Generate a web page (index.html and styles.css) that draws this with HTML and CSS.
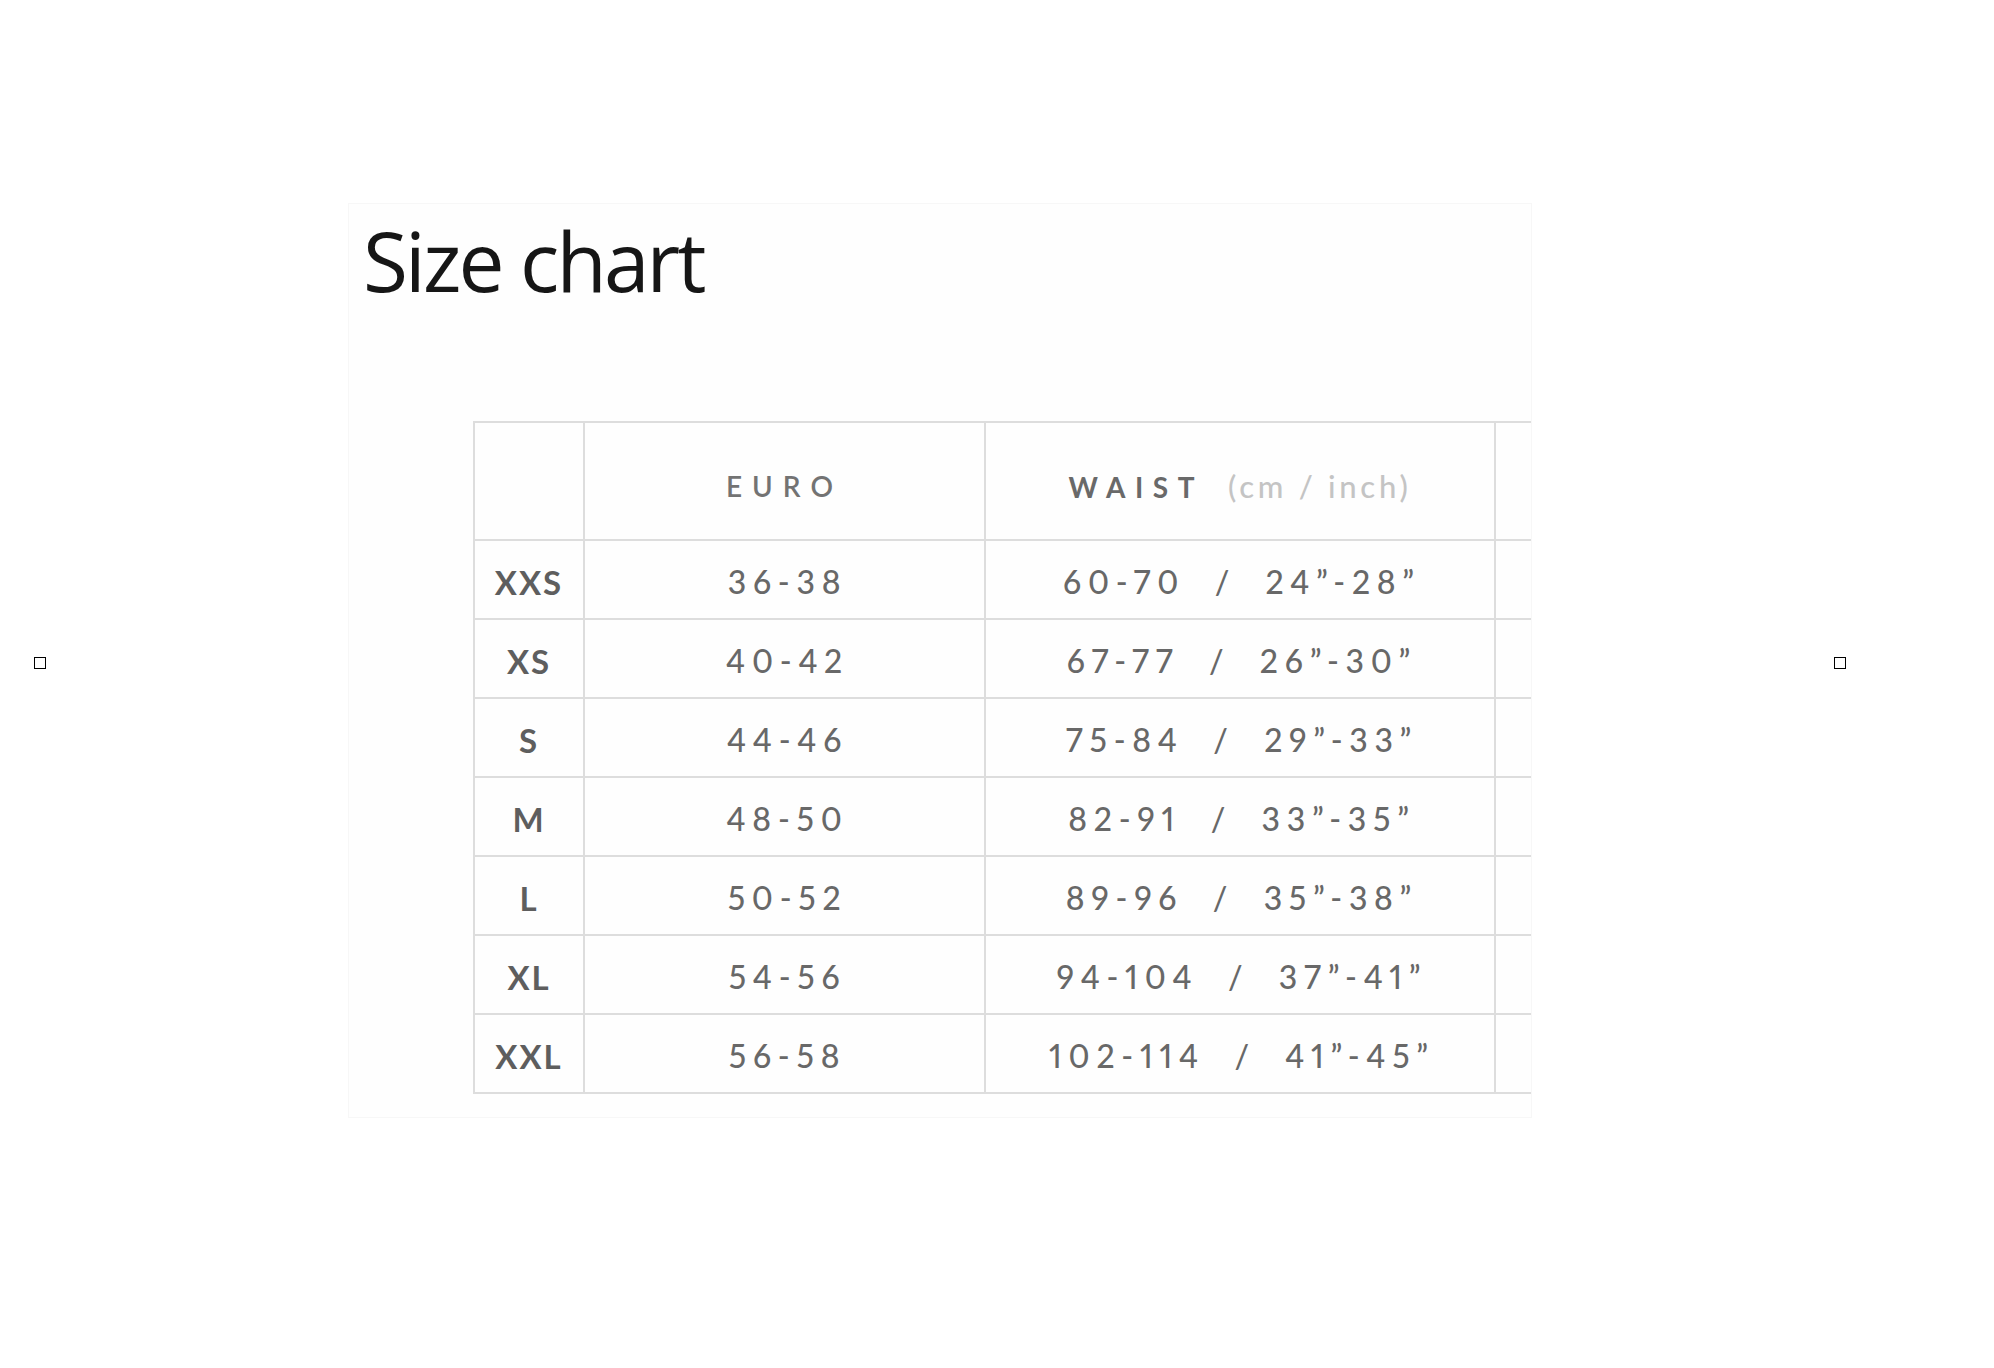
FILE: index.html
```html
<!DOCTYPE html>
<html lang="en">
<head>
<meta charset="utf-8">
<title>Size chart</title>
<link rel="stylesheet" href="styles.css">
</head>
<body>
<div class="slider">
  <button class="arrow arrow-prev" aria-label="Previous"></button>
  <div class="stage">
    <div class="chart">
      <h1 class="chart-title">Size chart</h1>
      <table class="size-table">
        <colgroup>
          <col class="c-size"><col class="c-euro"><col class="c-waist"><col class="c-next">
        </colgroup>
        <thead>
          <tr>
            <th></th>
            <th class="h-euro">EURO</th>
            <th class="h-waist">WAIST<span class="unit">(cm / inch)</span></th>
            <th></th>
          </tr>
        </thead>
        <tbody>
          <tr><td class="size">XXS</td><td>36-38</td><td class="waist">60-70  /  24”-28”</td><td></td></tr>
          <tr><td class="size">XS</td><td>40-42</td><td class="waist">67-77  /  26”-30”</td><td></td></tr>
          <tr><td class="size">S</td><td>44-46</td><td class="waist">75-84  /  29”-33”</td><td></td></tr>
          <tr><td class="size">M</td><td>48-50</td><td class="waist">82-91  /  33”-35”</td><td></td></tr>
          <tr><td class="size">L</td><td>50-52</td><td class="waist">89-96  /  35”-38”</td><td></td></tr>
          <tr><td class="size">XL</td><td>54-56</td><td class="waist">94-104  /  37”-41”</td><td></td></tr>
          <tr><td class="size">XXL</td><td>56-58</td><td class="waist">102-114  /  41”-45”</td><td></td></tr>
        </tbody>
      </table>
    </div>
  </div>
  <button class="arrow arrow-next" aria-label="Next"></button>
</div>
</body>
</html>
```
FILE: styles.css
```css
html, body {
  margin: 0;
  padding: 0;
  background: #ffffff;
}

body {
  font-family: "Lato", "DejaVu Sans", sans-serif;
}

.slider {
  width: 1880px;
  box-sizing: border-box;
  padding: 0 34px;
  margin-top: 203px;
  display: flex;
  align-items: center;
}

.arrow {
  flex: none;
  width: 12px;
  height: 12px;
  margin-top: 5px;
  padding: 0;
  border: 1px solid #000;
  background: #fff;
  box-sizing: border-box;
}

.stage {
  flex: 1;
  display: flex;
  justify-content: center;
}

.chart {
  width: 1184px;
  height: 915px;
  box-sizing: border-box;
  background: #fefefe;
  border: 1px solid #f7f7f7;
  overflow: hidden;
  padding: 15px 0 0 14px;
}

.chart-title {
  margin: 0;
  font-family: "Open Sans", "Noto Sans", sans-serif;
  font-weight: 400;
  font-size: 82px;
  line-height: 82px;
  letter-spacing: -0.035em;
  color: #161616;
}

.size-table {
  margin: 120px 0 0 110px;
  border-collapse: collapse;
  table-layout: fixed;
  width: 1221px;
  border: 2px solid #dddddd;
}

.c-size { width: 110px; }
.c-euro { width: 401px; }
.c-waist { width: 510px; }
.c-next { width: 200px; }

.size-table th,
.size-table td {
  box-sizing: border-box;
  border: 2px solid #dddddd;
  padding: 4px 0 0 0;
  text-align: center;
  vertical-align: middle;
  white-space: pre;
  font-variant-numeric: proportional-nums;
}

.size-table th {
  height: 118px;
  padding-top: 10px;
  font-size: 28px;
  letter-spacing: 0.36em;
  font-weight: 600;
  color: #737373;
}

.size-table th.h-waist {
  font-weight: 700;
  letter-spacing: 0.34em;
  color: #696969;
  padding-left: 0;
}

.unit {
  margin-left: 24px;
  font-size: 31px;
  font-weight: 500;
  letter-spacing: 0.12em;
  color: #c4c4c4;
}

.size-table td {
  height: 79px;
  font-size: 32px;
  font-weight: 500;
  letter-spacing: 0.21em;
  color: #686868;
  padding-left: 6px;
}

.size-table td.size {
  font-weight: 700;
  font-size: 33px;
  letter-spacing: 0.06em;
  color: #5e5e5e;
  padding-left: 0;
}

.size-table td.waist {
  padding-left: 4px;
}
```
